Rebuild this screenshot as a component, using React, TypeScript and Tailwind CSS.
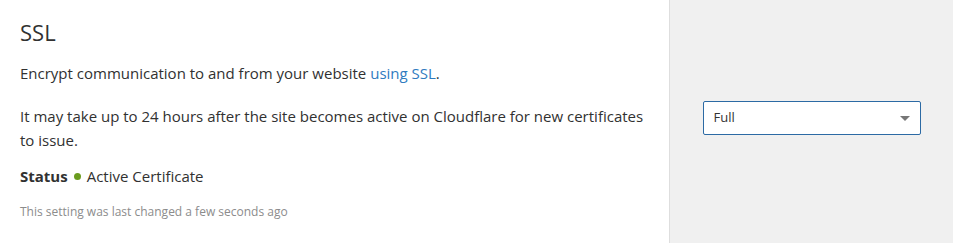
import React from "react";

const App = () => {
  return (
    <div className="flex w-[953px] h-[243px] bg-white text-[#313131] font-['Open_Sans',sans-serif]">
      <div className="w-[669px] px-5 pt-[17px]">
        <h2 className="text-[22px] leading-[30px] font-normal">SSL</h2>
        <p className="mt-[15px] text-[15px] leading-[22px]">
          Encrypt communication to and from your website{" "}
          <a href="#" className="text-[#2f7bbf]">
            using SSL
          </a>
          .
        </p>
        <p className="mt-[20px] text-[15px] leading-[24px]">
          It may take up to 24 hours after the site becomes active on Cloudflare for new certificates to issue.
        </p>
        <div className="mt-[13px] flex items-center text-[15px] leading-[22px]">
          <span className="font-bold">Status</span>
          <span className="ml-[6px] mr-[6px] inline-block w-[7px] h-[7px] rounded-full bg-[#6b9c1f]"></span>
          <span>Active Certificate</span>
        </div>
        <p className="mt-[16px] text-[12px] leading-[18px] text-[#8c8c8c]">
          This setting was last changed a few seconds ago
        </p>
      </div>
      <div className="flex-1 bg-[#f0f0f0] border-l border-[#dedede] flex items-start justify-center pt-[101px]">
        <div className="w-[218px] h-[34px] bg-white border border-[#2c6aa4] rounded-[2px] flex items-center justify-between pl-[10px] pr-[10px]">
          <span className="text-[13px] text-[#333]">Full</span>
          <svg width="10" height="5" viewBox="0 0 10 5">
            <path d="M0 0 L10 0 L5 5 Z" fill="#777" />
          </svg>
        </div>
      </div>
    </div>
  );
};

export default App;
